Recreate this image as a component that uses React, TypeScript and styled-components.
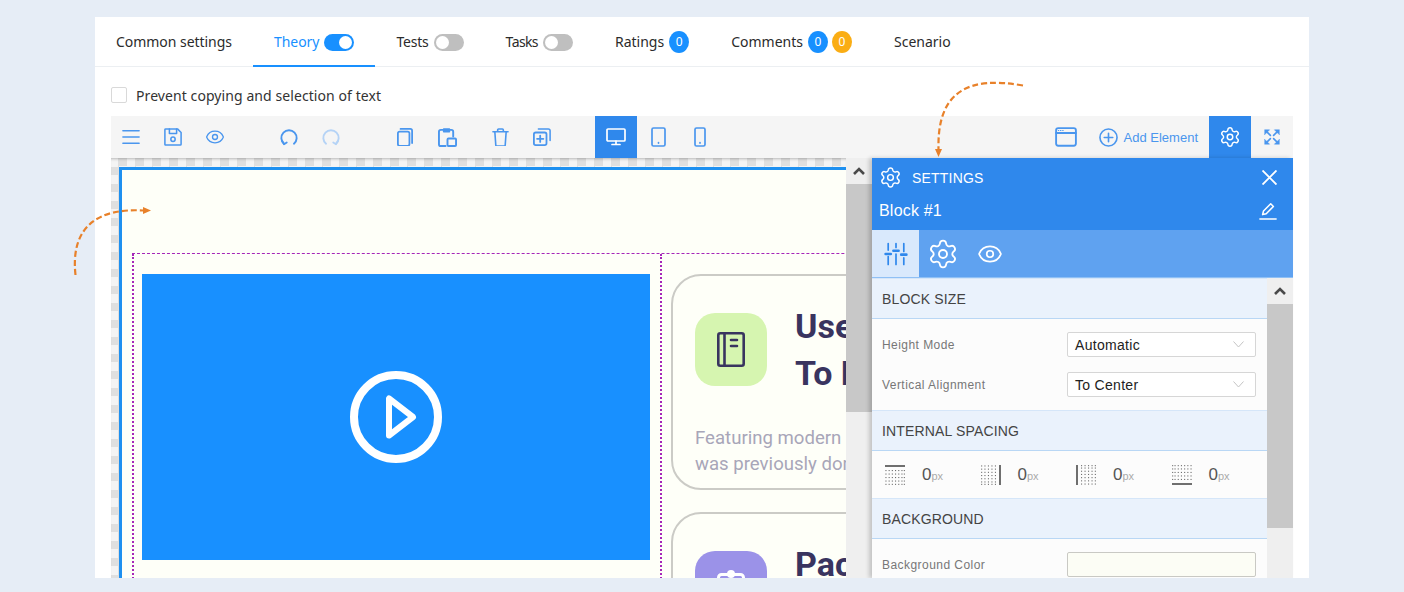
import type { ReactNode } from 'react';
import styled, { createGlobalStyle } from 'styled-components';
import { Settings, Eye } from 'lucide-react';

const GlobalStyle = createGlobalStyle`
  html, body {
    margin: 0;
    height: 592px;
    overflow: hidden;
    background: #e6edf6;
    font-family: "Noto Sans", Arial, sans-serif;
  }
  * { box-sizing: border-box; }
`;

const Page = styled.div`
  position: relative;
  height: 592px;
  padding: 17px 95px 14px;
`;

const Card = styled.div`
  height: 561px;
  background: #fff;
  overflow: hidden;
`;

const TabBar = styled.div`
  display: flex;
  height: 50px;
  border-bottom: 1px solid #eceff2;
`;

const Tab = styled.div<{ $active?: boolean }>`
  display: flex;
  align-items: center;
  gap: 5px;
  height: 50px;
  padding: 1px 21px 0;
  font-size: 14px;
  color: ${p => (p.$active ? '#1890ff' : '#2b2b2b')};
  border-bottom: 2px solid ${p => (p.$active ? '#1890ff' : 'transparent')};
`;

const TabLabel = styled.span<{ $track?: number }>`
  letter-spacing: ${p => p.$track ?? 0}px;
`;

const Toggle = styled.span<{ $on?: boolean }>`
  display: flex;
  justify-content: ${p => (p.$on ? 'flex-end' : 'flex-start')};
  align-items: center;
  width: 30px;
  height: 17px;
  margin-top: 2px;
  padding: 0 2px;
  border-radius: 9px;
  background: ${p => (p.$on ? '#1890ff' : '#bfbfbf')};

  &::after {
    content: '';
    width: 13px;
    height: 13px;
    border-radius: 50%;
    background: #fff;
  }
`;

const Badges = styled.span`
  display: flex;
  gap: 4px;
`;

const Badge = styled.span<{ $color: string }>`
  display: flex;
  align-items: center;
  justify-content: center;
  width: 20px;
  height: 22px;
  border-radius: 50%;
  font-size: 12px;
  color: #fff;
  background: ${p => p.$color};
`;

const Content = styled.div`
  padding: 0 16px;
`;

const CheckRow = styled.label`
  display: flex;
  align-items: center;
  gap: 9px;
  height: 49px;
  padding-top: 7px;
  font-size: 14px;
  letter-spacing: 0.08px;
  color: #333;
`;

const CheckBox = styled.span`
  width: 16px;
  height: 16px;
  border: 1px solid #d9d9d9;
  border-radius: 2px;
  background: #fff;
`;

const Toolbar = styled.div`
  display: flex;
  align-items: stretch;
  height: 42px;
  background: #f5f5f5;
  color: #4a96ee;
`;

const ToolGroup = styled.div<{ $gap?: number }>`
  display: flex;
  margin-left: ${p => p.$gap ?? 0}px;
`;

const ToolButton = styled.div<{ $active?: boolean; $muted?: boolean }>`
  display: flex;
  align-items: center;
  justify-content: center;
  width: 42px;
  color: ${p => (p.$active ? '#fff' : p.$muted ? '#b5d3f6' : '#4a96ee')};
  background: ${p => (p.$active ? '#2f88ec' : 'transparent')};
`;

const ToolSpacer = styled.div`
  flex: 1;
`;

const AddElement = styled.div`
  display: flex;
  align-items: center;
  gap: 6px;
  margin: 0 11px 0 12px;
  font-family: "Liberation Sans", Arial, sans-serif;
  font-size: 13px;
  color: #4a96ee;
`;

const Editor = styled.div`
  display: flex;
  height: 420px;
`;

const Canvas = styled.div`
  flex: 1;
  min-width: 0;
  overflow: hidden;
  padding: 9px 0 0 8px;
  background: repeating-conic-gradient(#dfdfdf 0 25%, #f4f4f4 0 50%) -1px 0 / 17px 17px;
  box-shadow: inset 0 3px 3px -2px rgba(0, 0, 0, 0.25);
`;

const Block = styled.div`
  width: 1100px;
  height: 600px;
  padding: 83px 0 0 10px;
  background: #fefff8;
  border-top: 3px solid #1e90f0;
  border-left: 3px solid #1e90f0;
`;

const Row = styled.div`
  display: flex;
  border-top: 1px dashed #a626b8;
`;

const VideoColumn = styled.div`
  flex: none;
  width: 530px;
  height: 340px;
  padding: 20px 0 0 8px;
  border-left: 2px dotted #a626b8;
  border-right: 2px dotted #a626b8;
`;

const Video = styled.div`
  display: flex;
  align-items: center;
  justify-content: center;
  width: 508px;
  height: 286px;
  background: #1890ff;
`;

const FeatureColumn = styled.div`
  display: flex;
  flex-direction: column;
  gap: 22px;
  padding: 20px 0 0 9px;
`;

const FeatureCard = styled.div`
  width: 500px;
  height: 216px;
  padding: 37px 22px;
  border: 2px solid #cbcbc6;
  border-radius: 30px;
`;

const FeatureHead = styled.div`
  display: flex;
  gap: 28px;
`;

const FeatureIcon = styled.div<{ $color: string }>`
  display: flex;
  align-items: center;
  justify-content: center;
  flex: none;
  width: 72px;
  height: 73px;
  border-radius: 20px;
  background: ${p => p.$color};
`;

const FeatureTitle = styled.div`
  margin-top: -10px;
  font-family: Roboto, Arial, sans-serif;
  font-size: 34px;
  line-height: 47px;
  font-weight: 700;
  color: #39345f;
`;

const FeatureText = styled.div`
  margin-top: 28px;
  font-family: Roboto, Arial, sans-serif;
  font-size: 18.6px;
  line-height: 26px;
  color: #a8a6b8;
  white-space: nowrap;
`;

const Scrollbar = styled.div<{ $thumb: number }>`
  flex: none;
  width: 26px;
  height: 100%;
  background: #efefef;
  display: flex;
  flex-direction: column;

  &::after {
    content: '';
    height: ${p => p.$thumb}px;
    background: #c8c8c8;
  }
`;

const ScrollUp = styled.div`
  display: flex;
  align-items: center;
  justify-content: center;
  height: 26px;
  color: #4a4a4a;
`;

const Panel = styled.div`
  display: flex;
  flex-direction: column;
  flex: none;
  width: 421px;
  background: #fcfcfc;
  box-shadow: -3px 0 4px rgba(0, 0, 0, 0.18);
  font-family: "Liberation Sans", Arial, sans-serif;
  z-index: 1;
`;

const PanelHeader = styled.div`
  height: 72px;
  padding: 0 16px 0 7px;
  background: #2f88ec;
  color: #fff;
`;

const PanelLine = styled.div<{ $h: number }>`
  display: flex;
  align-items: center;
  justify-content: space-between;
  height: ${p => p.$h}px;
`;

const PanelTitle = styled.div`
  display: flex;
  align-items: center;
  gap: 10px;
  font-size: 14px;
  letter-spacing: 0.2px;
`;

const BlockName = styled.div`
  font-size: 16px;
  letter-spacing: 0.2px;
`;

const PanelTabs = styled.div`
  display: flex;
  height: 48px;
  background: #5fa2f0;
  color: #fff;
  border-bottom: 1px solid #8fc0f5;
`;

const PanelTab = styled.div<{ $active?: boolean; $w: number }>`
  display: flex;
  align-items: center;
  justify-content: center;
  width: ${p => p.$w}px;
  color: ${p => (p.$active ? '#2f88ec' : '#fff')};
  background: ${p => (p.$active ? '#d9e9fc' : 'transparent')};
`;

const PanelBody = styled.div`
  display: flex;
  flex: 1;
  min-height: 0;
`;

const PanelForm = styled.div`
  flex: 1;
  min-width: 0;
  overflow: hidden;
`;

const SectionHead = styled.div`
  display: flex;
  align-items: center;
  height: 41px;
  padding-left: 10px;
  font-size: 14px;
  letter-spacing: 0.15px;
  color: #444;
  background: #eaf2fc;
  border-top: 1px solid #d5e6f9;
  border-bottom: 1px solid #b9d7f5;
`;

const Fields = styled.div`
  display: flex;
  flex-direction: column;
  gap: 15px;
  padding: 13px 11px 13px 10px;
`;

const Field = styled.div`
  display: flex;
  align-items: center;
  justify-content: space-between;
  height: 25px;
  font-size: 12px;
  letter-spacing: 0.45px;
  color: #777;
`;

const Select = styled.div`
  display: flex;
  align-items: center;
  justify-content: space-between;
  width: 189px;
  height: 25px;
  padding: 0 11px 0 7px;
  font-size: 14px;
  letter-spacing: 0.3px;
  color: #222;
  background: #fff;
  border: 1px solid #d6d6d6;
  border-radius: 2px;
`;

const Swatch = styled.div`
  width: 189px;
  height: 25px;
  background: #fcfdf5;
  border: 1px solid #c9c9c4;
  border-radius: 2px;
`;

const SpacingRow = styled.div`
  display: flex;
  height: 47px;
  padding-left: 13px;
`;

const SpacingItem = styled.div`
  display: flex;
  align-items: center;
  gap: 17px;
  width: 96.3px;
  color: #555;
`;

const SpacingValue = styled.span`
  font-size: 17px;

  small {
    font-size: 11px;
    color: #aaa;
  }
`;

const Arrows = styled.svg`
  position: absolute;
  inset: 0;
  pointer-events: none;
  z-index: 2;
`;

const Stroke = ({ size = 20, w = 20, h = 20, children }: { size?: number; w?: number; h?: number; children: ReactNode }) => (
  <svg width={size} height={(size * h) / w} viewBox={`0 0 ${w} ${h}`} fill="none" stroke="currentColor" strokeWidth="1.7" strokeLinecap="round" strokeLinejoin="round">
    {children}
  </svg>
);

const Chevron = () => (
  <svg width="12" height="8" viewBox="0 0 12 8" fill="none" stroke="currentColor" strokeWidth="2.6">
    <path d="M1 7l5-5 5 5" />
  </svg>
);

const SelectChevron = () => (
  <svg width="11" height="7" viewBox="0 0 11 7" fill="none" stroke="#c4c4c4" strokeWidth="1">
    <path d="M.5.5l5 5.5 5-5.5" />
  </svg>
);

const DOT_ROWS = [5, 8.5, 12, 15.5, 18.8];
const DOT_COLS = [0.4, 3.6, 6.8, 10, 13.2, 16.4, 18.8];

const SpacingIcon = ({ side }: { side: 'top' | 'right' | 'left' | 'bottom' }) => {
  const rotate = { top: 0, right: 90, bottom: 180, left: 270 }[side];
  return (
    <svg width="20" height="20" viewBox="0 0 20 20" style={{ transform: `rotate(${rotate}deg)` }}>
      <path d="M0 1h20" stroke="#555" strokeWidth="1.7" />
      {DOT_ROWS.flatMap(y =>
        DOT_COLS.map(x => <rect key={`${x}-${y}`} x={x} y={y} width="1.1" height="1.1" fill="#6e6e6e" />)
      )}
    </svg>
  );
};

export default function App() {
  return (
    <Page>
      <GlobalStyle />
      <Card>
        <TabBar>
          <Tab><TabLabel $track={-0.04}>Common settings</TabLabel></Tab>
          <Tab $active><TabLabel $track={-0.05}>Theory</TabLabel><Toggle $on /></Tab>
          <Tab><TabLabel $track={-0.2}>Tests</TabLabel><Toggle /></Tab>
          <Tab><TabLabel $track={-0.6}>Tasks</TabLabel><Toggle /></Tab>
          <Tab>Ratings <Badge $color="#1890ff">0</Badge></Tab>
          <Tab>
            Comments
            <Badges>
              <Badge $color="#1890ff">0</Badge>
              <Badge $color="#faad14">0</Badge>
            </Badges>
          </Tab>
          <Tab>Scenario</Tab>
        </TabBar>
        <Content>
          <CheckRow><CheckBox />Prevent copying and selection of text</CheckRow>
          <Toolbar>
            <ToolGroup $gap={-1}>
              <ToolButton>
                <Stroke size={18}><path d="M1 3h18M1 10h18M1 17h18" /></Stroke>
              </ToolButton>
              <ToolButton>
                <Stroke size={18}>
                  <path d="M2 1h13l4 4v13a1 1 0 0 1-1 1H2a1 1 0 0 1-1-1V2a1 1 0 0 1 1-1z" />
                  <path d="M6 1v5h8V1" />
                  <circle cx="10" cy="12.5" r="2.4" />
                </Stroke>
              </ToolButton>
              <ToolButton><Eye size={20} strokeWidth={1.6} /></ToolButton>
            </ToolGroup>
            <ToolGroup $gap={32}>
              <ToolButton>
                <Stroke size={18}>
                  <path d="M4.5 17.5A8.5 8.5 0 1 1 15.5 17.5" strokeWidth="2.1" />
                  <path d="M2.5 14.5l2 3.5 3-2" strokeWidth="2" />
                </Stroke>
              </ToolButton>
              <ToolButton $muted>
                <Stroke size={18}>
                  <path d="M15.5 17.5A8.5 8.5 0 1 0 4.5 17.5" strokeWidth="2.1" />
                  <path d="M17.5 14.5l-2 3.5-3-2" strokeWidth="2" />
                </Stroke>
              </ToolButton>
            </ToolGroup>
            <ToolGroup $gap={32}>
              <ToolButton>
                <Stroke size={16} h={21} w={18}>
                  <path d="M4 1h11a2 2 0 0 1 2 2v14" strokeWidth="2" />
                  <rect x="1" y="4" width="13" height="16" rx="2" strokeWidth="2" />
                </Stroke>
              </ToolButton>
              <ToolButton>
                <Stroke size={19}>
                  <path d="M8 19H3a2 2 0 0 1-2-2V4a2 2 0 0 1 2-2h11a2 2 0 0 1 2 2v5" strokeWidth="2" />
                  <rect x="6" y="1" width="6" height="3" fill="currentColor" />
                  <rect x="10" y="11" width="9" height="8" rx="1" strokeWidth="2" />
                </Stroke>
              </ToolButton>
            </ToolGroup>
            <ToolGroup $gap={11}>
              <ToolButton>
                <Stroke size={17} w={18}>
                  <path d="M1 4h16M6 4V2a1 1 0 0 1 1-1h4a1 1 0 0 1 1 1v2" />
                  <path d="M3 4l1 14a1 1 0 0 0 1 1h8a1 1 0 0 0 1-1l1-14" />
                </Stroke>
              </ToolButton>
              <ToolButton>
                <Stroke size={18}>
                  <path d="M6 1h11a2 2 0 0 1 2 2v11" />
                  <rect x="1" y="5" width="14" height="14" rx="2" strokeWidth="2" />
                  <path d="M8 8.5v7M4.5 12h7" strokeWidth="2" />
                </Stroke>
              </ToolButton>
            </ToolGroup>
            <ToolGroup $gap={32}>
              <ToolButton $active>
                <Stroke size={20} h={18}>
                  <rect x="1" y="1" width="18" height="12" rx="1" />
                  <path d="M10 13v3M6 16.5h8" />
                </Stroke>
              </ToolButton>
              <ToolButton>
                <Stroke size={15} w={15} h={20}>
                  <rect x="1" y="1" width="13" height="18" rx="1.5" />
                  <path d="M7.5 15.5v.6" />
                </Stroke>
              </ToolButton>
              <ToolButton>
                <Stroke size={12} w={12} h={20}>
                  <rect x="1" y="1" width="10" height="18" rx="1.5" />
                  <path d="M6 15.5v.6" />
                </Stroke>
              </ToolButton>
            </ToolGroup>
            <ToolSpacer />
            <ToolButton>
              <Stroke size={22} h={18}>
                <rect x="1" y="1" width="18" height="16" rx="2" />
                <path d="M1 5.5h18" />
                <path d="M3 3.2h.4M5 3.2h.4M7 3.2h.4" strokeWidth="1" />
              </Stroke>
            </ToolButton>
            <AddElement>
              <Stroke size={19}>
                <circle cx="10" cy="10" r="9" />
                <path d="M10 5.5v9M5.5 10h9" />
              </Stroke>
              Add Element
            </AddElement>
            <ToolButton $active><Settings size={22} strokeWidth={1.6} /></ToolButton>
            <ToolButton>
              <Stroke size={16}>
                <path d="M1 1h6L1 7zM19 1h-6l6 6zM1 19h6l-6-6zM19 19h-6l6-6z" fill="currentColor" strokeWidth="0.6" />
                <path d="M3 3l5 5M17 3l-5 5M3 17l5-5M17 17l-5-5" strokeWidth="2" />
              </Stroke>
            </ToolButton>
          </Toolbar>
          <Editor>
            <Canvas>
              <Block>
                <Row>
                  <VideoColumn>
                    <Video>
                      <svg width="92" height="92" viewBox="-46 -46 92 92" fill="none" stroke="#fff">
                        <circle r="42" strokeWidth="8" />
                        <path d="M-7-18.5V18.5L17 0z" strokeWidth="6" strokeLinejoin="round" />
                      </svg>
                    </Video>
                  </VideoColumn>
                  <FeatureColumn>
                    <FeatureCard>
                      <FeatureHead>
                        <FeatureIcon $color="#d6f5b0">
                          <svg width="28" height="35" viewBox="0 0 28 35" fill="none" stroke="#39345f" strokeWidth="2.6" strokeLinecap="round" strokeLinejoin="round">
                            <rect x="1.3" y="1.3" width="25.4" height="32.4" rx="2" />
                            <path d="M7.5 1.3v32.4" />
                            <path d="M14 8h6M14 14h6" />
                          </svg>
                        </FeatureIcon>
                        <FeatureTitle>Useful Tools<br />To Learn</FeatureTitle>
                      </FeatureHead>
                      <FeatureText>Featuring modern instruments for what<br />was previously done by hand</FeatureText>
                    </FeatureCard>
                    <FeatureCard>
                      <FeatureHead>
                        <FeatureIcon $color="#9b92e8">
                          <svg width="28" height="35" viewBox="0 0 28 35" fill="#fff">
                            <circle cx="14" cy="4" r="4" />
                            <rect x="1.5" y="4.5" width="25" height="26" rx="3" fill="none" stroke="#fff" strokeWidth="3" />
                          </svg>
                        </FeatureIcon>
                        <FeatureTitle>Package<br />Of Lessons</FeatureTitle>
                      </FeatureHead>
                    </FeatureCard>
                  </FeatureColumn>
                </Row>
              </Block>
            </Canvas>
            <Scrollbar $thumb={228}>
              <ScrollUp><Chevron /></ScrollUp>
            </Scrollbar>
            <Panel>
              <PanelHeader>
                <PanelLine $h={39}>
                  <PanelTitle><Settings size={23} strokeWidth={1.5} />SETTINGS</PanelTitle>
                  <svg width="15" height="15" viewBox="0 0 15 15" stroke="#fff" strokeWidth="1.9">
                    <path d="M.5.5l14 14M14.5.5l-14 14" />
                  </svg>
                </PanelLine>
                <PanelLine $h={27}>
                  <BlockName>Block #1</BlockName>
                  <Stroke size={18}>
                    <path d="M4 14l1-4 8-8 3 3-8 8z" />
                    <path d="M1 19h18" />
                  </Stroke>
                </PanelLine>
              </PanelHeader>
              <PanelTabs>
                <PanelTab $active $w={47}>
                  <Stroke size={26}>
                    <path d="M4 2v5M4 12v6M10 2v3M10 10v8M16 2v6M16 13v5" strokeWidth="1.3" />
                    <path d="M2 10h4M8 7.5h4M14 10.5h4" strokeWidth="2" />
                  </Stroke>
                </PanelTab>
                <PanelTab $w={48}><Settings size={32} strokeWidth={1.4} /></PanelTab>
                <PanelTab $w={46}><Eye size={26} strokeWidth={1.6} /></PanelTab>
              </PanelTabs>
              <PanelBody>
                <PanelForm>
                  <SectionHead>BLOCK SIZE</SectionHead>
                  <Fields>
                    <Field>Height Mode<Select>Automatic<SelectChevron /></Select></Field>
                    <Field>Vertical Alignment<Select>To Center<SelectChevron /></Select></Field>
                  </Fields>
                  <SectionHead>INTERNAL SPACING</SectionHead>
                  <SpacingRow>
                    {(['top', 'right', 'left', 'bottom'] as const).map(side => (
                      <SpacingItem key={side}>
                        <SpacingIcon side={side} />
                        <SpacingValue>0<small>px</small></SpacingValue>
                      </SpacingItem>
                    ))}
                  </SpacingRow>
                  <SectionHead>BACKGROUND</SectionHead>
                  <Fields>
                    <Field>Background Color<Swatch /></Field>
                  </Fields>
                </PanelForm>
                <Scrollbar $thumb={224}>
                  <ScrollUp><Chevron /></ScrollUp>
                </Scrollbar>
              </PanelBody>
            </Panel>
          </Editor>
        </Content>
      </Card>
      <Arrows width="1404" height="592" fill="none">
        <path d="M75.5 275C70 225 100 208 143 210.5" stroke="#e8812a" strokeWidth="2.2" strokeDasharray="6 3" />
        <path d="M151 210.5l-8-3.5v7z" fill="#e8812a" />
        <path d="M1023 85.5C970 76 937 90 938.5 149" stroke="#e8812a" strokeWidth="2.2" strokeDasharray="6 3" />
        <path d="M938.5 157l-3.5-8h7z" fill="#e8812a" />
      </Arrows>
    </Page>
  );
}
